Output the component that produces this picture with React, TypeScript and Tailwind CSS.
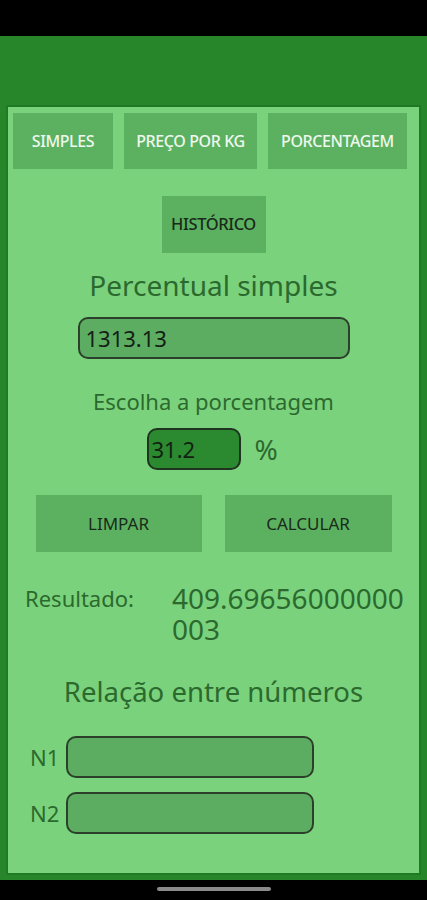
import React from "react";

const font = { fontFamily: '"Noto Sans", "Open Sans", Roboto, sans-serif' };

export default function App() {
  return (
    <div className="w-[427px] h-[900px] bg-black flex flex-col overflow-hidden" style={font}>
      <div className="h-[36px] shrink-0" />
      <div className="h-[844px] shrink-0 bg-[#27852a] px-[6px] pt-[69px] pb-[5px] flex">
        <div className="flex-1 border-2 border-[#1f7a24] bg-[#7bd27c] flex flex-col">
          <div className="flex pt-[6px] pl-[5px] gap-[11px]">
            <div className="w-[100px] h-[56px] bg-[#5cb161] flex items-center justify-center text-[16px] text-[#eef8ee] font-medium tracking-tight">SIMPLES</div>
            <div className="w-[133px] h-[56px] bg-[#5cb161] flex items-center justify-center text-[16px] text-[#eef8ee] font-medium tracking-tight">PREÇO POR KG</div>
            <div className="w-[139px] h-[56px] bg-[#5cb161] flex items-center justify-center text-[16px] text-[#eef8ee] font-medium tracking-tight">PORCENTAGEM</div>
          </div>
          <div className="flex justify-center mt-[27px]">
            <div className="w-[104px] h-[57px] bg-[#5cb161] flex items-center justify-center text-[16.5px] text-[#1a2a1a] font-medium tracking-tight">HISTÓRICO</div>
          </div>
          <div className="mt-[15px] text-center text-[28px] leading-[34px] text-[#2b6a2e]">Percentual simples</div>
          <div className="flex justify-center mt-[15px]">
            <div className="w-[272px] h-[42px] rounded-[10px] border-2 border-[#2b3f2b] bg-[#5cad61] flex items-center pl-[6px] text-[22px] text-[#142014]">1313.13</div>
          </div>
          <div className="mt-[28px] text-center text-[22px] leading-[28px] text-[#2b6a2e]">Escolha a porcentagem</div>
          <div className="flex justify-center items-center mt-[13px] gap-[14px]">
            <div className="w-[94px] h-[42px] rounded-[10px] border-2 border-[#1f3320] bg-[#2b8a2f] flex items-center pl-[3px] text-[22px] text-[#142014]">31.2</div>
            <div className="text-[28px] text-[#2b6a2e] w-[26px]">%</div>
          </div>
          <div className="flex justify-center mt-[25px] gap-[23px]">
            <div className="w-[166px] h-[57px] bg-[#5cb161] flex items-center justify-center text-[17px] text-[#1a2a1a]">LIMPAR</div>
            <div className="w-[167px] h-[57px] bg-[#5cb161] flex items-center justify-center text-[17px] text-[#1a2a1a]">CALCULAR</div>
          </div>
          <div className="flex items-start mt-[31px] pl-[17px]">
            <div className="w-[147px] text-[22px] leading-[31px] text-[#2b6a2e]">Resultado:</div>
            <div className="w-[240px] break-all text-[28px] leading-[31px] text-[#2b6a2e]">409.69656000000003</div>
          </div>
          <div className="mt-[30px] text-center text-[27.5px] leading-[34px] text-[#2b6a2e]">Relação entre números</div>
          <div className="flex flex-col gap-[14px] mt-[27px] pl-[22px]">
            <div className="flex items-center gap-[7px]">
              <div className="w-[29px] text-[22px] text-[#2b6a2e]">N1</div>
              <div className="w-[248px] h-[42px] rounded-[10px] border-2 border-[#2b3f2b] bg-[#5cad61]" />
            </div>
            <div className="flex items-center gap-[7px]">
              <div className="w-[29px] text-[22px] text-[#2b6a2e]">N2</div>
              <div className="w-[248px] h-[42px] rounded-[10px] border-2 border-[#2b3f2b] bg-[#5cad61]" />
            </div>
          </div>
        </div>
      </div>
      <div className="h-[20px] shrink-0 flex justify-center pt-[7px]">
        <div className="w-[114px] h-[4px] rounded-full bg-[#8a8a8a]" />
      </div>
    </div>
  );
}
